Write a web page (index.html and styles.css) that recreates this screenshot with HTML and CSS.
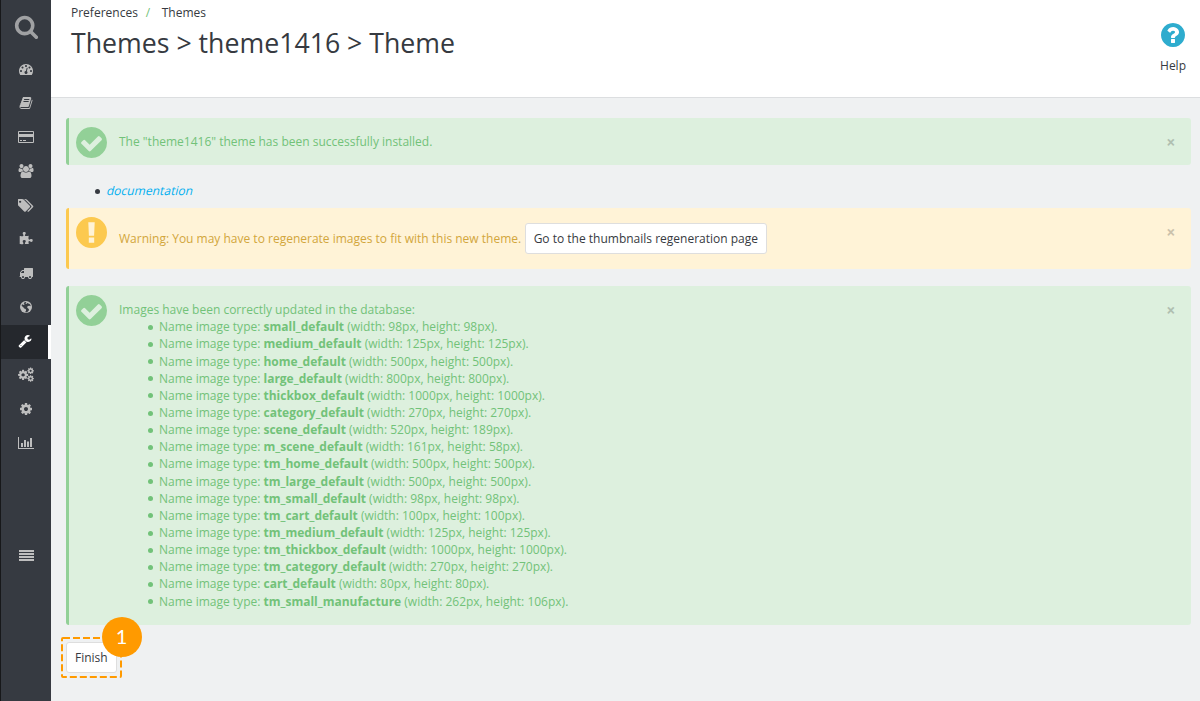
FILE: index.html
```html
<!DOCTYPE html>
<html lang="en">
<head>
<meta charset="utf-8">
<title>Themes</title>
<link rel="stylesheet" href="styles.css">
</head>
<body>
<svg class="defs" aria-hidden="true">
  <symbol id="cog" viewBox="0 0 1792 1792"><path d="M1152 896q0-106-75-181t-181-75-181 75-75 181 75 181 181 75 181-75 75-181zm512-109v222q0 12-8 23t-20 13l-185 28q-19 54-39 91 35 50 107 138 10 12 10 25t-9 23q-27 37-99 108t-94 71q-12 0-26-9l-138-108q-44 23-91 38-16 136-29 186-7 28-36 28h-222q-14 0-24.5-8.5t-11.5-21.5l-28-184q-49-16-90-37l-141 107q-10 9-25 9-14 0-25-11-126-114-165-168-7-10-7-23 0-12 8-23 15-21 51-66.5t54-70.5q-27-50-41-99l-183-27q-13-2-21-12.5t-8-23.5v-222q0-12 8-23t19-13l186-28q14-46 39-92-40-57-107-138-10-12-10-24 0-10 9-23 26-36 98.5-107.5t94.5-71.5q13 0 26 10l138 107q44-23 91-38 16-136 29-186 7-28 36-28h222q14 0 24.5 8.5t11.5 21.5l28 184q49 16 90 37l142-107q9-9 24-9 13 0 25 10 129 119 165 170 7 8 7 22 0 12-8 23-15 21-51 66.5t-54 70.5q26 50 41 98l183 28q13 2 21 12.5t8 23.5z"/></symbol>
  <symbol id="check" viewBox="128 128 1536 1536"><path d="M1412 734q0-28-18-46l-91-90q-19-19-45-19t-45 19l-408 407-226-226q-19-19-45-19t-45 19l-91 90q-18 18-18 46 0 27 18 45l362 362q19 19 45 19 27 0 46-19l543-543q18-18 18-45zm252 162q0 209-103 385.5t-279.5 279.5-385.5 103-385.5-103-279.5-279.5-103-385.5 103-385.5 279.5-279.5 385.5-103 385.5 103 279.5 279.5 103 385.5z"/></symbol>
</svg>
<div class="app">
  <nav class="sidebar">
    <a class="search"><svg width="25" height="25" viewBox="0 0 1792 1792"><path d="M1216 832q0-185-131.5-316.5t-316.5-131.5-316.5 131.5-131.5 316.5 131.5 316.5 316.5 131.5 316.5-131.5 131.5-316.5zm512 832q0 52-38 90t-90 38q-54 0-90-38l-343-342q-179 124-399 124-143 0-273.5-55.5t-225-150-150-225-55.5-273.5 55.5-273.5 150-225 225-150 273.5-55.5 273.5 55.5 225 150 150 225 55.5 273.5q0 220-124 399l343 343q37 37 37 90z"/></svg></a>
    <a class="item"><svg width="14" height="14" viewBox="0 0 1792 1792"><path d="M384 1152q0-53-37.5-90.5t-90.5-37.5-90.5 37.5-37.5 90.5 37.5 90.5 90.5 37.5 90.5-37.5 37.5-90.5zm192-448q0-53-37.5-90.5t-90.5-37.5-90.5 37.5-37.5 90.5 37.5 90.5 90.5 37.5 90.5-37.5 37.5-90.5zm428 481l101-382q6-26-7.5-48.5t-38.5-29.5-48 6.5-30 39.5l-101 382q-60 5-107 43.5t-63 98.5q-20 77 20 146t117 89 146-20 89-117q16-60-6-117t-72-91zm660-33q0-53-37.5-90.5t-90.5-37.5-90.5 37.5-37.5 90.5 37.5 90.5 90.5 37.5 90.5-37.5 37.5-90.5zm-640-640q0-53-37.5-90.5t-90.5-37.5-90.5 37.5-37.5 90.5 37.5 90.5 90.5 37.5 90.5-37.5 37.5-90.5zm448 192q0-53-37.5-90.5t-90.5-37.5-90.5 37.5-37.5 90.5 37.5 90.5 90.5 37.5 90.5-37.5 37.5-90.5zm320 448q0 261-141 483-19 29-54 29h-1402q-35 0-54-29-141-221-141-483 0-182 71-348t191-286 286-191 348-71 348 71 286 191 191 286 71 348z"/></svg></a>
    <a class="item"><svg width="14" height="14" viewBox="0 0 1792 1792"><path d="M1703 478q40 57 18 129l-275 906q-19 64-76.5 107.5t-122.5 43.5h-923q-77 0-148.5-53.5t-99.5-131.5q-24-67-2-127 0-4 3-27t4-37q1-8-3-21.5t-3-19.5q2-11 8-21t16.5-23.5 16.5-23.5q23-38 45-91.5t30-91.5q3-10 .5-30t-.5-28q3-11 17-28t17-23q21-36 42-92t25-90q1-9-2.5-32t.5-28q4-13 22-30.5t22-22.5q19-26 42.5-84.5t27.5-96.5q1-8-3-25.5t-2-26.5q2-8 9-18t18-23 17-21q8-12 16.5-30.5t15-35 16-36 19.5-32 26.5-23.5 36-11.5 47.5 5.5l-1 3q38-9 51-9h761q74 0 114 56t18 130l-274 906q-36 119-71.5 153.5t-128.5 34.5h-869q-27 0-38 15-11 16-1 43 24 70 144 70h923q29 0 56-15.5t35-41.5l300-987q7-22 5-57 38 15 59 43zm-1064 2q-4 13 2 22.5t20 9.5h608q13 0 25.5-9.5t16.5-22.5l21-64q4-13-2-22.5t-20-9.5h-608q-13 0-25.5 9.5t-16.5 22.5zm-83 256q-4 13 2 22.5t20 9.5h608q13 0 25.5-9.5t16.5-22.5l21-64q4-13-2-22.5t-20-9.5h-608q-13 0-25.5 9.5t-16.5 22.5z"/></svg></a>
    <a class="item"><svg width="16" height="12" viewBox="0 0 16 12"><path fill-rule="evenodd" d="M1 0h14q1 0 1 1v10q0 1-1 1H1q-1 0-1-1V1q0-1 1-1zM1 1v2h14V1zM1 6v5h14V6zM2 9h2v1H2zM5 9h3v1H5z"/></svg></a>
    <a class="item"><svg width="16" height="14" viewBox="0 0 2048 1792"><path d="M657 896q-162 5-265 128h-134q-82 0-138-40.5t-56-118.5q0-353 124-353 6 0 43.5 21t97.5 42.5 119 21.5q67 0 133-23-5 37-5 66 0 159 93 293zm1071 637q0 120-73 189.5t-194 69.5h-874q-121 0-194-69.5t-73-189.5q0-53 3.5-103.5t14-109 26.5-108.5 43-97.5 62-81 85.5-53.5 111.5-20q10 0 43 21.5t73 48 107 48 135 21.5 135-21.5 107-48 73-48 43-21.5q61 0 111.5 20t85.5 53.5 62 81 43 97.5 26.5 108.5 14 109 3.5 103.5zm-1024-1277q0 106-75 181t-181 75-181-75-75-181 75-181 181-75 181 75 75 181zm704 384q0 159-112.5 271.5t-271.5 112.5-271.5-112.5-112.5-271.5 112.5-271.5 271.5-112.5 271.5 112.5 112.5 271.5zm576 225q0 78-56 118.5t-138 40.5h-134q-103-123-265-128 93-134 93-293 0-29-5-66 66 23 133 23 59 0 119-21.5t97.5-42.5 43.5-21q124 0 124 353zm-128-609q0 106-75 181t-181 75-181-75-75-181 75-181 181-75 181 75 75 181z"/></svg></a>
    <a class="item"><svg width="16" height="15" viewBox="0 0 1920 1792"><path d="M384 448q0-53-37.5-90.5t-90.5-37.5-90.5 37.5-37.5 90.5 37.5 90.5 90.5 37.5 90.5-37.5 37.5-90.5zm1067 576q0 53-37 90l-491 492q-39 37-91 37-53 0-90-37l-715-716q-38-37-64.5-101t-26.5-117v-416q0-52 38-90t90-38h416q53 0 117 26.5t102 64.5l715 714q37 39 37 91zm384 0q0 53-37 90l-491 492q-39 37-91 37-36 0-59-14t-53-45l470-470q37-37 37-90 0-52-37-91l-715-714q-38-38-102-64.5t-117-26.5h224q53 0 117 26.5t102 64.5l715 714q37 39 37 91z"/></svg></a>
    <a class="item"><svg width="14" height="14" viewBox="0 0 1792 1792"><path d="M1755 1083q0 81-44.5 135t-123.5 54q-41 0-77.5-17.5t-59-38-56.5-38-71-17.5q-110 0-110 124 0 39 16 115t15 115v5q-22 0-33 1-34 3-97.5 11.5t-115.5 13.5-98 5q-61 0-103-26.5t-42-83.5q0-37 17.5-71t38-56.5 38-59 17.5-77.5q0-79-54-123.5t-135-44.5q-84 0-143 45.5t-59 127.5q0 43 15 83t33.5 64.5 33.5 53 15 50.5q0 45-46 89-37 35-117 35-95 0-245-24-9-2-27.5-4t-27.5-4l-13-2q-1 0-3-1-2 0-2-1v-1024q2 1 17.5 3.5t34 5 21.5 3.5q150 24 245 24 80 0 117-35 46-44 46-89 0-22-15-50.5t-33.5-53-33.5-64.5-15-83q0-82 59-127.5t144-45.5q80 0 134 44.5t54 123.5q0 41-17.5 77.5t-38 59-38 56.5-17.5 71q0 57 42 83.5t103 26.5q64 0 180-15t163-17v2q-1 2-3.5 17.5t-5 34-3.5 21.5q-24 150-24 245 0 80 35 117 44 46 89 46 22 0 50.5-15t53-33.5 64.5-33.5 83-15q82 0 127.5 59t45.5 143z"/></svg></a>
    <a class="item"><svg width="14" height="14" viewBox="0 0 1792 1792"><path d="M640 1408q0-52-38-90t-90-38-90 38-38 90 38 90 90 38 90-38 38-90zm-384-512h384v-256h-158q-13 0-22 9l-195 195q-9 9-9 22v30zm1280 512q0-52-38-90t-90-38-90 38-38 90 38 90 90 38 90-38 38-90zm256-1088v1024q0 15-4 26.5t-13.5 18.5-16.5 11.5-23.5 6-22.5 2-25.5 0-22.5-.5q0 106-75 181t-181 75-181-75-75-181h-384q0 106-75 181t-181 75-181-75-75-181h-64q-3 0-22.5.5t-25.5 0-22.5-2-23.5-6-16.5-11.5-13.5-18.5-4-26.5q0-26 19-45t45-19v-320q0-8-.5-35t0-38 2.5-34.5 6.5-37 14-30.5 22.5-30l198-198q19-19 50.5-32t58.5-13h160v-192q0-26 19-45t45-19h1024q26 0 45 19t19 45z"/></svg></a>
    <a class="item"><svg width="12" height="12" viewBox="0 0 12 12"><circle cx="6" cy="6" r="6"/><path class="cut" d="M5 1l1.500.2L5.400 2.400l1 .6 1-.9L10 3.200l.8 2-1.400-.5-1.600.2-.7 1.400.9 1.200.9.4-.1 1.500-1.100 1.400-1.700.6-.8-.4.9-1.600-.4-1.300-1.500-.6L3.100 6 2 5.200 1.600 4.300l.5-1L3.600 4l1.100-.8-1-.9z"/></svg></a>
    <a class="item active"><svg width="14" height="14" viewBox="0 0 1792 1792"><path d="M448 1472q0-26-19-45t-45-19-45 19-19 45 19 45 45 19 45-19 19-45zm644-420l-682 682q-37 37-90 37-52 0-91-37l-106-108q-38-36-38-90 0-53 38-91l681-681q39 98 114.500 173.500t173.500 114.500zm634-435q0 39-23 106-47 134-164.500 217.500t-258.500 83.500q-185 0-316.500-131.500t-131.500-316.500 131.500-316.500 316.500-131.500q58 0 121.500 16.500t107.500 46.500q16 11 16 28t-16 28l-293 169v224l193 107q5-3 79-48.500t135.500-81 70.500-35.500q15 0 23.500 10t8.500 25z"/></svg></a>
    <a class="item"><svg class="cogs" width="16" height="15" viewBox="0 0 16 15"><use href="#cog" x="-.8" y="2" width="11.800" height="11.800"/><use href="#cog" x="8.800" y="0" width="7.600" height="7.600"/><use href="#cog" x="8.800" y="7.700" width="7.600" height="7.600"/></svg></a>
    <a class="item"><svg width="14" height="14"><use href="#cog"/></svg></a>
    <a class="item"><svg width="16" height="12" viewBox="0 0 16 12"><path d="M0 0h1v11h15v1H0zM3 6h2v4H3zM6 3h2v7H6zM9 4.500h2V10H9zM12 1h2v9h-2z"/></svg></a>
    <a class="item collapse"><svg width="15" height="11" viewBox="0 0 15 11"><path d="M0 0h15v2H0zM0 3h15v2H0zM0 6h15v2H0zM0 9h15v2H0z"/></svg></a>
  </nav>
  <div class="main">
    <header class="header">
      <div>
        <div class="crumbs"><span>Preferences</span><span class="slash">/</span><span>Themes</span></div>
        <h1 class="title">Themes &gt; theme1416 &gt; Theme</h1>
      </div>
      <a class="help"><svg width="24" height="24" viewBox="128 128 1536 1536"><path d="M1024 1376v-192q0-14-9-23t-23-9h-192q-14 0-23 9t-9 23v192q0 14 9 23t23 9h192q14 0 23-9t9-23zm256-672q0-88-55.500-163t-138.500-116-170-41q-243 0-371 213-15 24 8 42l132 100q7 6 19 6 16 0 25-12 53-68 86-92 34-24 86-24 48 0 85.500 26t37.500 59q0 38-20 61t-68 45q-63 28-115.500 86.500t-52.500 125.500v36q0 14 9 23t23 9h192q14 0 23-9t9-23q0-19 21.500-49.500t54.500-49.500q32-18 49-28.500t46-35 44.500-48 28-60.500 12.500-81zm384 192q0 209-103 385.500t-279.500 279.500-385.500 103-385.500-103-279.500-279.500-103-385.500 103-385.500 279.500-279.500 385.500-103 385.500 103 279.500 279.500 103 385.500z"/></svg><span>Help</span></a>
    </header>
    <main class="content">
      <div class="alert success">
        <svg class="mark" width="31" height="31"><use href="#check"/></svg>
        <div class="text">The "theme1416" theme has been successfully installed.</div>
        <span class="close">×</span>
      </div>
      <ul class="docs"><li><a class="doc-link">documentation</a></li></ul>
      <div class="alert warning">
        <svg class="mark" width="31" height="31" viewBox="0 0 31 31"><path fill-rule="evenodd" d="M15.500 0a15.500 15.500 0 1 0 0 31a15.500 15.500 0 1 0 0-31zM12.300 5.200h6.400l-.6 13.600h-5.200zM12.800 20.600h5.400v5.200h-5.400z"/></svg>
        <div class="text row"><span class="notice">Warning: You may have to regenerate images to fit with this new theme.</span><button class="btn">Go to the thumbnails regeneration page</button></div>
        <span class="close">×</span>
      </div>
      <div class="alert success">
        <svg class="mark" width="31" height="31"><use href="#check"/></svg>
        <div class="text">Images have been correctly updated in the database:
          <ul class="types">
            <li>Name image type: <b>small_default</b> (width: 98px, height: 98px).</li>
            <li>Name image type: <b>medium_default</b> (width: 125px, height: 125px).</li>
            <li>Name image type: <b>home_default</b> (width: 500px, height: 500px).</li>
            <li>Name image type: <b>large_default</b> (width: 800px, height: 800px).</li>
            <li>Name image type: <b>thickbox_default</b> (width: 1000px, height: 1000px).</li>
            <li>Name image type: <b>category_default</b> (width: 270px, height: 270px).</li>
            <li>Name image type: <b>scene_default</b> (width: 520px, height: 189px).</li>
            <li>Name image type: <b>m_scene_default</b> (width: 161px, height: 58px).</li>
            <li>Name image type: <b>tm_home_default</b> (width: 500px, height: 500px).</li>
            <li>Name image type: <b>tm_large_default</b> (width: 500px, height: 500px).</li>
            <li>Name image type: <b>tm_small_default</b> (width: 98px, height: 98px).</li>
            <li>Name image type: <b>tm_cart_default</b> (width: 100px, height: 100px).</li>
            <li>Name image type: <b>tm_medium_default</b> (width: 125px, height: 125px).</li>
            <li>Name image type: <b>tm_thickbox_default</b> (width: 1000px, height: 1000px).</li>
            <li>Name image type: <b>tm_category_default</b> (width: 270px, height: 270px).</li>
            <li>Name image type: <b>cart_default</b> (width: 80px, height: 80px).</li>
            <li>Name image type: <b>tm_small_manufacture</b> (width: 262px, height: 106px).</li>
          </ul>
        </div>
        <span class="close">×</span>
      </div>
      <div class="finish">
        <button class="btn">Finish</button>
        <svg class="outline" width="61" height="41"><rect x="1" y="1" width="59" height="39" rx="1"/></svg>
        <span class="badge">1</span>
      </div>
    </main>
  </div>
</div>
</body>
</html>
```
FILE: styles.css
```css
* { box-sizing: border-box; }
body {
  margin: 0;
  font: 12px/1.42857 "Open Sans", sans-serif;
  color: #363a41;
  background: #eff1f2;
  overflow: hidden;
}
svg { display: block; }
.defs { position: absolute; width: 0; height: 0; }
.app { display: flex; height: 701px; }

.sidebar {
  width: 51px;
  flex: none;
  background: #363a41;
  border-left: 1px solid #17181a;
  fill: #bebebe;
}
.search { display: flex; justify-content: center; height: 53px; padding-top: 14px; fill: #a0a1a3; }
.item { display: flex; align-items: center; justify-content: center; height: 34px; padding-bottom: 2px; }
.item.active { background: #25282d; border-right: 3px solid #fff; padding-left: 1px; fill: #fff; }
.item.collapse { margin-top: 78px; }
.cogs { margin-top: -1px; }
.cut { fill: #363a41; }

.main { flex: 1; min-width: 0; }
.header {
  display: flex;
  justify-content: space-between;
  height: 98px;
  padding: 4px 14px 0 20px;
  background: #fff;
  border-bottom: 1px solid #dcdee0;
}
.crumbs { display: flex; }
.slash { color: #72c279; margin: 0 11.500px 0 8px; }
.title { margin: 4px 0 0; font-size: 26.700px; line-height: 36px; font-weight: 400; }
.help { display: flex; flex-direction: column; align-items: center; gap: 10px; padding-top: 19px; }
.help svg { fill: #2eacce; }

.content { padding: 20px 9px 0 15px; }
.alert {
  display: flex;
  align-items: flex-start;
  margin-bottom: 17px;
  padding: 15px 15.500px 15px 7px;
  border-left: 3px solid;
  border-radius: 3px;
}
.success { color: #72c279; background: #ddf0de; border-color: #92d097; }
.warning { color: #d2a63c; background: #fff3d7; border-color: #fcc94f; }
.mark { flex: none; margin: -6.300px 12px -8px 0; }
.success .mark { fill: #92d097; }
.warning .mark { fill: #fcc94f; }
.text { flex: 1; }
.row { display: flex; align-items: center; gap: 4px; }
.notice { margin-top: -1px; }
.close { margin: 1px 0 -1px; font-size: 16px; line-height: 17px; font-weight: 700; color: #000; opacity: .2; }
ul { list-style: none; }
li { display: flex; align-items: center; white-space: pre; }
li::before {
  content: "";
  width: 5px;
  height: 5px;
  margin: 1px 6px 0 -11px;
  border-radius: 50%;
  background: currentColor;
}
.docs { margin: 0 0 8.840px; padding-left: 41px; }
.docs li::before { margin: 1px 7px 0 -12px; }
.doc-link { color: #00aff0; letter-spacing: .05px; transform: skewX(-14deg); }
.types { margin: 0; padding-left: 40px; }
.btn {
  height: 31px;
  padding: 0 7.500px;
  font: inherit;
  color: #363a41;
  background: #fff;
  border: 1px solid #dedede;
  border-radius: 3px;
}
.finish { position: relative; width: max-content; }
.finish .btn { padding: 1px 8px 0; }
.outline { position: absolute; left: -5px; top: -5px; }
.outline rect { fill: none; stroke: #ff9a00; stroke-width: 2; stroke-dasharray: 7 3; }
.badge {
  position: absolute;
  left: 36px;
  top: -25px;
  width: 40px;
  height: 40px;
  padding-right: 1px;
  border-radius: 50%;
  background: #ff9a00;
  color: #fff;
  font: 20px/39px Lato, sans-serif;
  text-align: center;
}
```
